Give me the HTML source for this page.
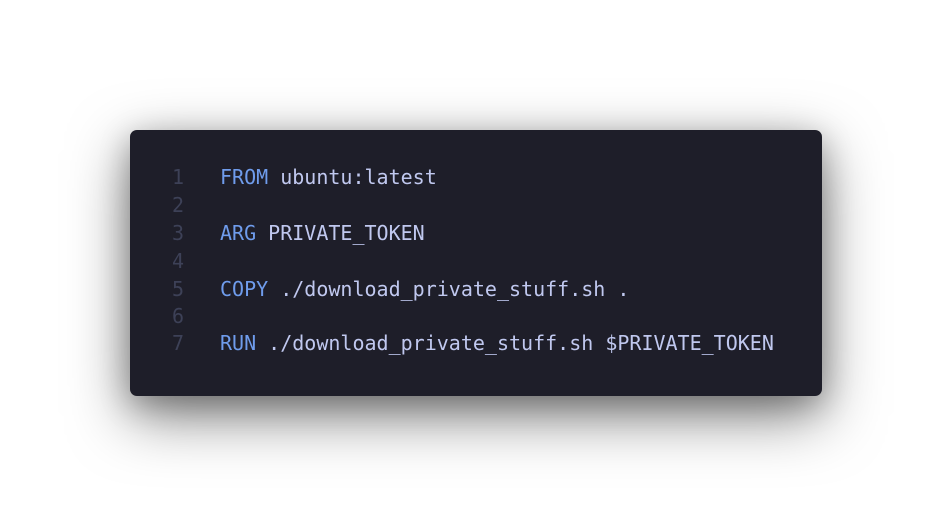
<!DOCTYPE html>
<html><head><style>
html,body{margin:0;padding:0;width:950px;height:526px;background:#fff;overflow:hidden}
.card{position:absolute;left:130px;top:130px;width:692px;height:266px;background:#1e1e29;border-radius:7px;box-shadow:0 20px 60px rgba(0,0,0,0.5),0 8px 30px rgba(0,0,0,0.25)}
.l{position:absolute;left:0;height:28px;line-height:28px;font-family:"DejaVu Sans Mono","Liberation Mono",monospace;font-size:20px;white-space:pre;color:#c0c8ef}
.n{position:absolute;left:0;width:54px;text-align:right;color:#3d4157}
.c{position:absolute;left:90px}
.k{color:#6f9cec}
</style></head><body>
<div class="card">
<div class="l" style="top:33px"><span class="n">1</span><span class="c"><span class="k">FROM</span> ubuntu:latest</span></div>
<div class="l" style="top:61px"><span class="n">2</span></div>
<div class="l" style="top:89px"><span class="n">3</span><span class="c"><span class="k">ARG</span> PRIVATE_TOKEN</span></div>
<div class="l" style="top:117px"><span class="n">4</span></div>
<div class="l" style="top:145px"><span class="n">5</span><span class="c"><span class="k">COPY</span> ./download_private_stuff.sh .</span></div>
<div class="l" style="top:172px"><span class="n">6</span></div>
<div class="l" style="top:199px"><span class="n">7</span><span class="c"><span class="k">RUN</span> ./download_private_stuff.sh $PRIVATE_TOKEN</span></div>
</div>
</body></html>
